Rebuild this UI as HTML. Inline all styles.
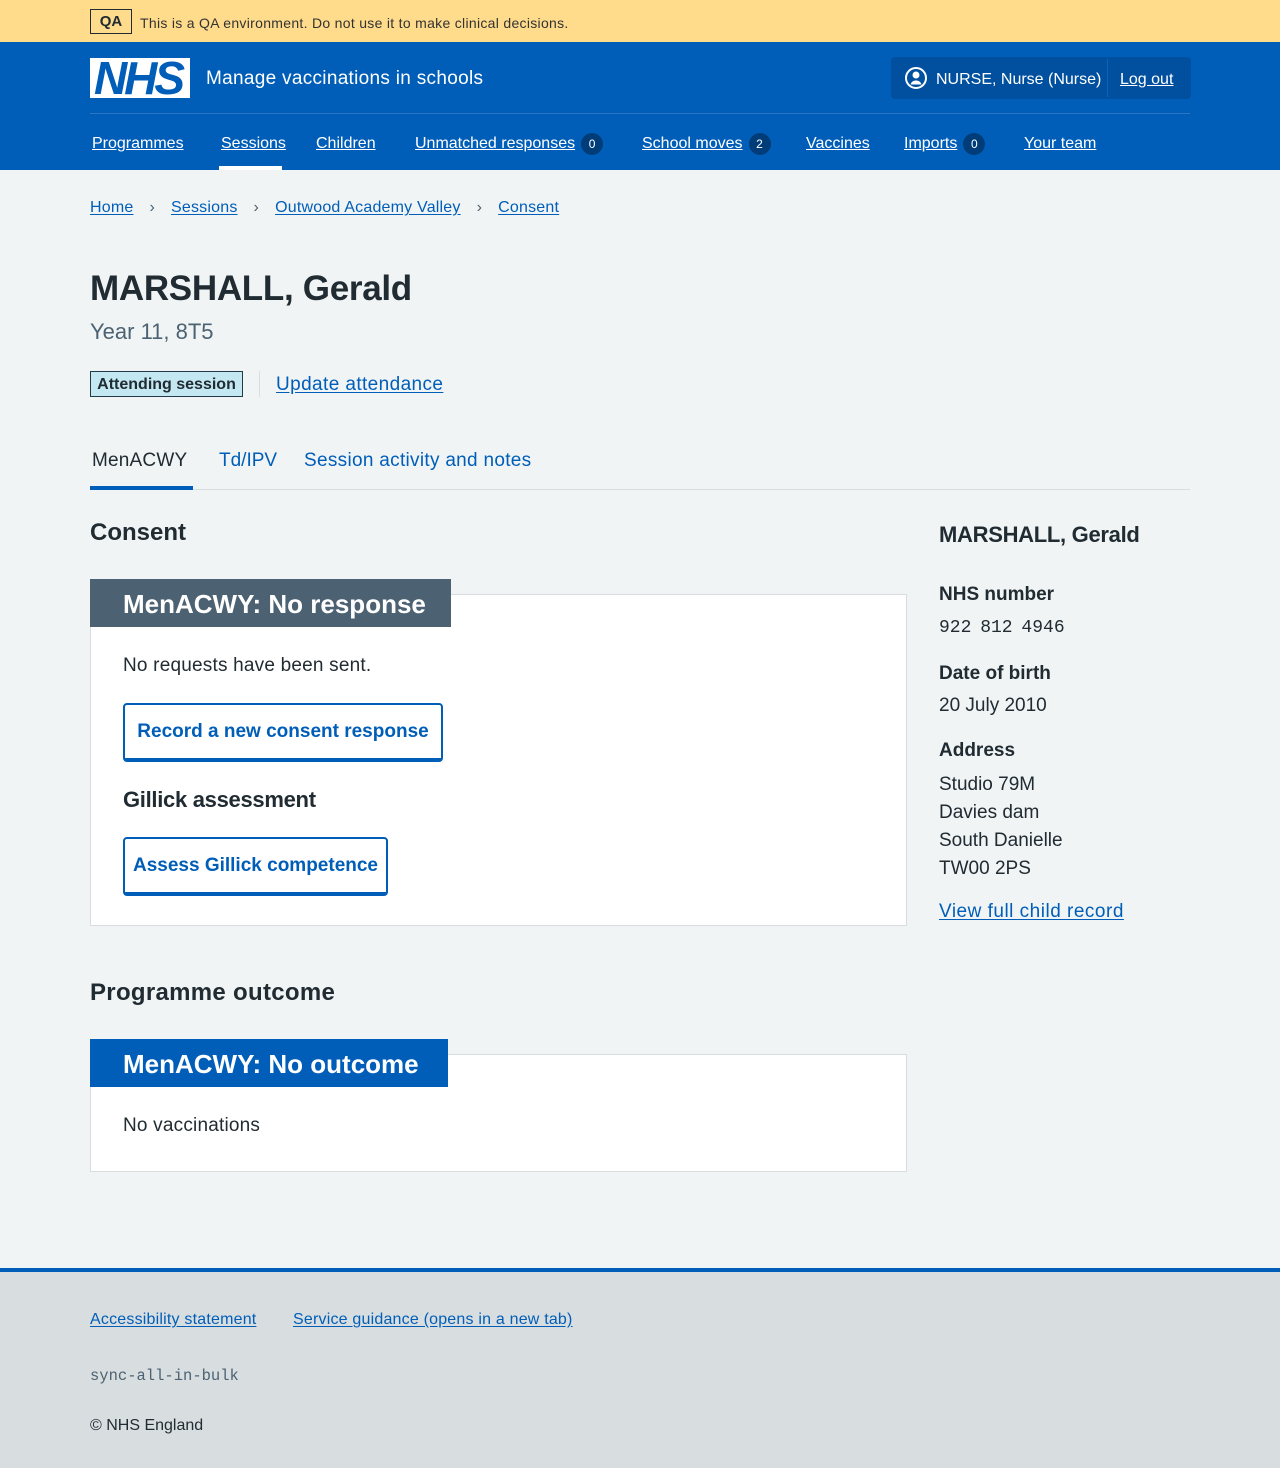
<!DOCTYPE html>
<html><head><meta charset="utf-8"><style>
*{margin:0;padding:0;box-sizing:border-box}
body{width:1280px;height:1468px;position:relative;background:#f0f4f5;font-family:"Liberation Sans",sans-serif;color:#212b32;overflow:hidden}
.a{position:absolute;white-space:nowrap}
.t{margin-top:2px}
a,.l{color:#005eb8;text-decoration:underline;text-underline-offset:2px}
.w{color:#fff}
.b{font-weight:bold}
.badge{display:inline-block;width:22px;height:22px;border-radius:11px;background:#003d78;color:#fff;font-size:12px;text-align:center;line-height:22px;margin-left:6px;text-decoration:none;vertical-align:middle}
.sep{color:#4c6272;margin:0 16px}
</style></head><body>
<div class="a" style="left:0;top:0;width:1280px;height:42px;background:#ffdb8c"></div>
<div class="a" style="left:90px;top:9px;width:42px;height:25px;border:1px solid #212b32;font-size:15px;font-weight:bold;text-align:center;line-height:23px">QA</div>
<div class="a t" style="left:140px;top:12px;font-size:14px;line-height:18px;color:#333;letter-spacing:0.3px">This is a QA environment. Do not use it to make clinical decisions.</div>

<div class="a" style="left:0;top:42px;width:1280px;height:128px;background:#005eb8"></div>
<div class="a" style="left:90px;top:58px;width:100px;height:40px;background:#fff;color:#005eb8;font-weight:bold;font-style:italic;font-size:46px;line-height:40px;letter-spacing:-3px;text-align:center;padding-right:4px">NHS</div>
<div class="a w t" style="left:206px;top:65px;font-size:19px;line-height:24px;letter-spacing:0.3px">Manage vaccinations in schools</div>
<div class="a" style="left:891px;top:57px;width:300px;height:42px;background:#00509f;border-radius:4px"></div>
<div class="a" style="left:1107px;top:59px;width:1px;height:38px;background:#0a64bb"></div>
<svg class="a" style="left:904px;top:66px" width="24" height="24" viewBox="0 0 24 24"><circle cx="12" cy="12" r="10" fill="none" stroke="#fff" stroke-width="2"/><circle cx="12" cy="9" r="3.5" fill="#fff"/><path d="M6.5 18.5c1-3 3-4 5.5-4s4.5 1 5.5 4" fill="#fff"/></svg>
<div class="a w t" style="left:936px;top:68px;font-size:16px;line-height:20px">NURSE, Nurse (Nurse)</div>
<div class="a w t" style="left:1120px;top:68px;font-size:16px;line-height:20px;text-decoration:underline">Log out</div>
<div class="a" style="left:90px;top:113px;width:1100px;height:1px;background:#2b75c6"></div>
<div class="a w t" style="left:92px;top:131px;font-size:16px;line-height:22px;text-decoration:underline">Programmes</div>
<div class="a w t" style="left:221px;top:131px;font-size:16px;line-height:22px;text-decoration:underline">Sessions</div>
<div class="a" style="left:219px;top:166px;width:63px;height:4px;background:#fff"></div>
<div class="a w t" style="left:316px;top:131px;font-size:16px;line-height:22px;text-decoration:underline">Children</div>
<div class="a w t" style="left:415px;top:131px;font-size:16px;line-height:22px"><span style="text-decoration:underline">Unmatched responses</span><span class="badge">0</span></div>
<div class="a w t" style="left:642px;top:131px;font-size:16px;line-height:22px"><span style="text-decoration:underline">School moves</span><span class="badge">2</span></div>
<div class="a w t" style="left:806px;top:131px;font-size:16px;line-height:22px;text-decoration:underline">Vaccines</div>
<div class="a w t" style="left:904px;top:131px;font-size:16px;line-height:22px"><span style="text-decoration:underline">Imports</span><span class="badge">0</span></div>
<div class="a w t" style="left:1024px;top:131px;font-size:16px;line-height:22px;text-decoration:underline">Your team</div>

<div class="a t" style="left:90px;top:195px;font-size:16px;line-height:22px;letter-spacing:0.2px"><a>Home</a><span class="sep">›</span><a>Sessions</a><span class="sep">›</span><a>Outwood Academy Valley</a><span class="sep">›</span><a>Consent</a></div>

<div class="a b t" style="left:90px;top:265px;font-size:35px;line-height:44px;letter-spacing:-0.3px">MARSHALL, Gerald</div>
<div class="a t" style="left:90px;top:317px;font-size:22px;line-height:26px;color:#4c6272">Year 11, 8T5</div>
<div class="a b" style="left:90px;top:371px;width:153px;height:26px;background:#c4e8f2;border:1px solid #1f3c48;font-size:16px;line-height:26px;text-align:center">Attending session</div>
<div class="a" style="left:259px;top:371px;width:1px;height:26px;background:#d8dde0"></div>
<div class="a l t" style="left:276px;top:371px;font-size:19px;line-height:24px;letter-spacing:0.4px">Update attendance</div>

<div class="a t" style="left:92px;top:447px;font-size:19px;line-height:24px;letter-spacing:0.2px">MenACWY</div>
<div class="a t" style="left:219px;top:447px;font-size:19px;line-height:24px;color:#005eb8">Td/IPV</div>
<div class="a t" style="left:304px;top:447px;font-size:19px;line-height:24px;color:#005eb8;letter-spacing:0.3px">Session activity and notes</div>
<div class="a" style="left:90px;top:489px;width:1100px;height:1px;background:#d8dde0"></div>
<div class="a" style="left:90px;top:486px;width:103px;height:4px;background:#005eb8"></div>

<div class="a b t" style="left:90px;top:516px;font-size:24px;line-height:30px">Consent</div>
<div class="a" style="left:90px;top:594px;width:817px;height:332px;background:#fff;border:1px solid #d8dde0"></div>
<div class="a b w" style="left:90px;top:579px;width:361px;height:48px;background:#4c6272;font-size:26px;line-height:50px;padding-left:33px">MenACWY: No response</div>
<div class="a t" style="left:123px;top:652px;font-size:19px;line-height:24px;letter-spacing:0.2px">No requests have been sent.</div>
<div class="a b" style="left:123px;top:703px;width:320px;height:59px;border:2px solid #005eb8;border-bottom-width:4px;border-radius:4px;background:#fff;color:#005eb8;font-size:19px;line-height:53px;text-align:center">Record a new consent response</div>
<div class="a b t" style="left:123px;top:784px;font-size:22px;line-height:28px;letter-spacing:-0.3px">Gillick assessment</div>
<div class="a b" style="left:123px;top:837px;width:265px;height:59px;border:2px solid #005eb8;border-bottom-width:4px;border-radius:4px;background:#fff;color:#005eb8;font-size:19px;line-height:53px;text-align:center">Assess Gillick competence</div>

<div class="a b t" style="left:90px;top:976px;font-size:24px;line-height:30px;letter-spacing:0.3px">Programme outcome</div>
<div class="a" style="left:90px;top:1054px;width:817px;height:118px;background:#fff;border:1px solid #d8dde0"></div>
<div class="a b w" style="left:90px;top:1039px;width:358px;height:48px;background:#005eb8;font-size:26px;line-height:50px;padding-left:33px">MenACWY: No outcome</div>
<div class="a t" style="left:123px;top:1112px;font-size:19px;line-height:24px;letter-spacing:0.2px">No vaccinations</div>

<div class="a b t" style="left:939px;top:519px;font-size:22px;line-height:28px;letter-spacing:-0.3px">MARSHALL, Gerald</div>
<div class="a b t" style="left:939px;top:581px;font-size:19px;line-height:24px">NHS number</div>
<div class="a t" style="left:939px;top:614px;font-size:18px;line-height:24px;font-family:'Liberation Mono',monospace;word-spacing:-2px">922 812 4946</div>
<div class="a b t" style="left:939px;top:660px;font-size:19px;line-height:24px">Date of birth</div>
<div class="a t" style="left:939px;top:692px;font-size:19px;line-height:24px">20 July 2010</div>
<div class="a b t" style="left:939px;top:737px;font-size:19px;line-height:24px">Address</div>
<div class="a t" style="left:939px;top:769px;font-size:19px;line-height:28px;white-space:normal">Studio 79M<br>Davies dam<br>South Danielle<br>TW00 2PS</div>
<div class="a l t" style="left:939px;top:898px;font-size:19px;line-height:24px;letter-spacing:0.5px">View full child record</div>

<div class="a" style="left:0;top:1268px;width:1280px;height:200px;background:#d8dde0;border-top:4px solid #005eb8"></div>
<div class="a l t" style="left:90px;top:1307px;font-size:16px;line-height:22px;letter-spacing:0.2px">Accessibility statement</div>
<div class="a l t" style="left:293px;top:1307px;font-size:16px;line-height:22px;letter-spacing:0.2px">Service guidance (opens in a new tab)</div>
<div class="a t" style="left:90px;top:1364px;font-size:15.5px;line-height:20px;font-family:'Liberation Mono',monospace;color:#4c6272">sync-all-in-bulk</div>
<div class="a t" style="left:90px;top:1413px;font-size:16px;line-height:22px">© NHS England</div>
</body></html>
